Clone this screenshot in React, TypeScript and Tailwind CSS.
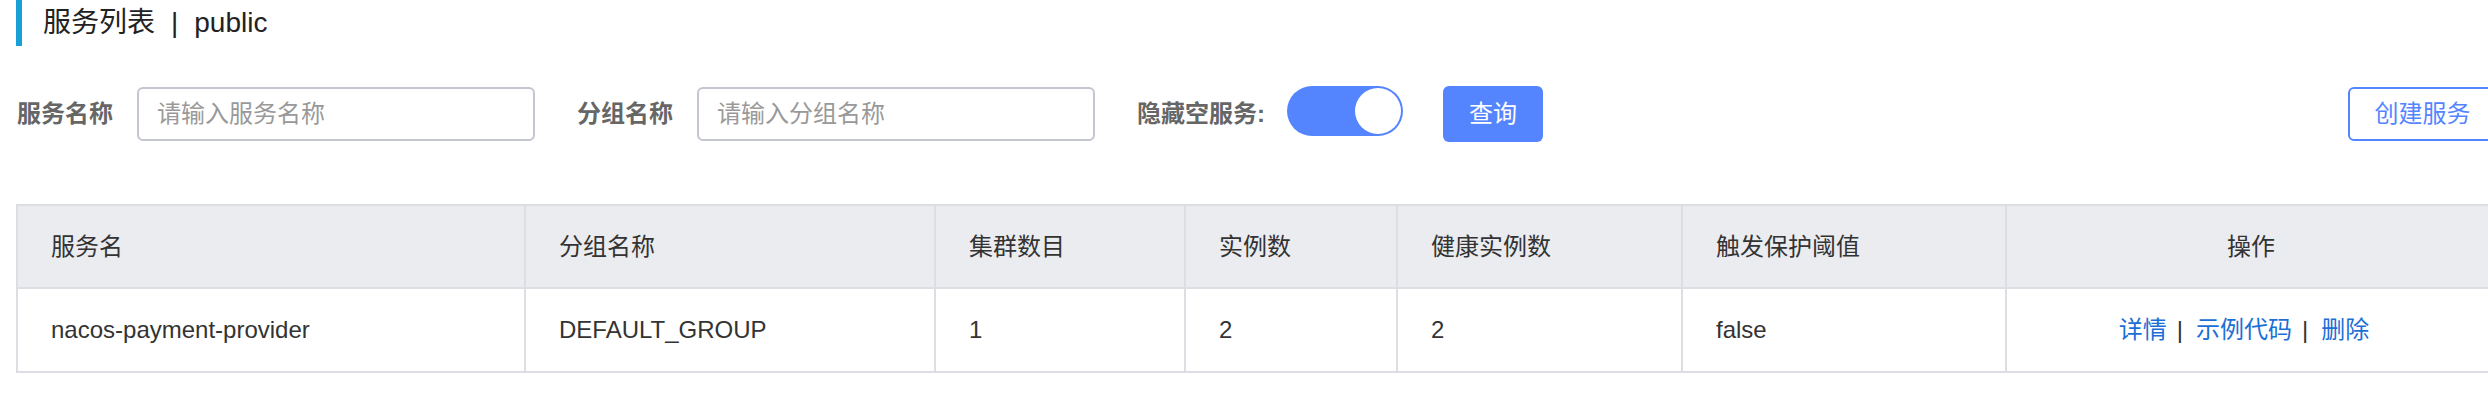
import React from "react";

const font = "font-['Liberation_Sans','Noto_Sans_CJK_SC',sans-serif]";

const columns = [
  { key: "name", label: "服务名", width: "w-[508px]" },
  { key: "group", label: "分组名称", width: "w-[410px]" },
  { key: "clusters", label: "集群数目", width: "w-[250px]" },
  { key: "instances", label: "实例数", width: "w-[212px]" },
  { key: "healthy", label: "健康实例数", width: "w-[285px]" },
  { key: "threshold", label: "触发保护阈值", width: "w-[324px]" },
] as const;

const rows = [
  {
    name: "nacos-payment-provider",
    group: "DEFAULT_GROUP",
    clusters: "1",
    instances: "2",
    healthy: "2",
    threshold: "false",
  },
];

function SearchInput({ placeholder }: { placeholder: string }) {
  return (
    <input
      className="box-border h-[54px] w-[398px] rounded-[6px] border-2 border-[#c4c6cf] bg-white pl-[18px] text-[24px] text-[#333] outline-none placeholder:text-[#999]"
      placeholder={placeholder}
    />
  );
}

function Toggle() {
  return (
    <div className="mb-[6px] flex h-[50px] w-[116px] items-center justify-end rounded-full bg-[#5584ff] pr-[2px]">
      <div className="h-[46px] w-[46px] rounded-full bg-white" />
    </div>
  );
}

export default function App() {
  return (
    <div className={`h-[404px] w-[2488px] overflow-hidden bg-white ${font}`}>
      <div className="w-[2497px] pl-[16px]">
        <div className="flex h-[46px] items-center border-l-[6px] border-[#189fd8] pl-[21px] text-[28px] text-[#222]">
          <span>服务列表</span>
          <span className="mx-[16px]">|</span>
          <span>public</span>
        </div>

        <div className="mt-[40px] flex h-[56px] items-center">
          <span className="ml-[1px] w-[96px] whitespace-nowrap text-[24px] font-bold text-[#666]">服务名称</span>
          <div className="ml-[24px]">
            <SearchInput placeholder="请输入服务名称" />
          </div>
          <span className="ml-[42px] w-[94px] whitespace-nowrap text-[24px] font-bold text-[#666]">分组名称</span>
          <div className="ml-[26px]">
            <SearchInput placeholder="请输入分组名称" />
          </div>
          <span className="ml-[42px] w-[125px] whitespace-nowrap text-[24px] font-bold text-[#666]">隐藏空服务:</span>
          <div className="ml-[25px]">
            <Toggle />
          </div>
          <button className="ml-[40px] h-[56px] w-[100px] rounded-[6px] bg-[#5584ff] text-[24px] text-white">
            查询
          </button>
          <button className="ml-auto box-border h-[54px] w-[149px] rounded-[6px] border-2 border-[#5584ff] bg-white text-[24px] text-[#5584ff]">
            创建服务
          </button>
        </div>

        <div className="mt-[62px] border-l-2 border-t-2 border-[#dcdee3] text-[24px] text-[#333]">
          <div className="flex bg-[#ebecf0]">
            {columns.map((c) => (
              <div
                key={c.key}
                className={`box-border flex h-[83px] items-center border-b-2 border-r-2 border-[#dcdee3] pl-[33px] ${c.width}`}
              >
                {c.label}
              </div>
            ))}
            <div className="box-border flex h-[83px] flex-1 items-center justify-center border-b-2 border-r-2 border-[#dcdee3]">
              操作
            </div>
          </div>
          {rows.map((r) => (
            <div key={r.name} className="flex bg-white">
              {columns.map((c) => (
                <div
                  key={c.key}
                  className={`box-border flex h-[84px] items-center border-b-2 border-r-2 border-[#dcdee3] pl-[33px] ${c.width}`}
                >
                  {r[c.key]}
                </div>
              ))}
              <div className="box-border flex h-[84px] flex-1 items-center justify-center border-b-2 border-r-2 border-[#dcdee3] pr-[14px]">
                <a className="cursor-pointer text-[#1b6fd6]">详情</a>
                <span className="ml-[10px] mr-[13px]">|</span>
                <a className="cursor-pointer text-[#1b6fd6]">示例代码</a>
                <span className="ml-[10px] mr-[13px]">|</span>
                <a className="cursor-pointer text-[#1b6fd6]">删除</a>
              </div>
            </div>
          ))}
        </div>
      </div>
    </div>
  );
}
